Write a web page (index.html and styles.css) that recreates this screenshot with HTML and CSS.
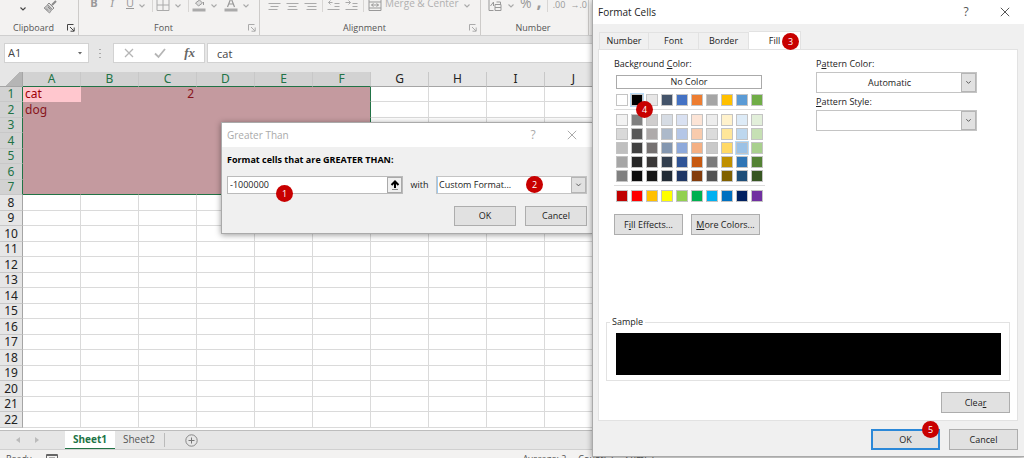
FILE: index.html
```html
<!DOCTYPE html>
<html lang="en">
<head>
<meta charset="utf-8">
<title>Format Cells</title>
<link rel="stylesheet" href="styles.css">
</head>
<body>
<svg class="defs" aria-hidden="true">
  <symbol id="chev" viewBox="0 0 8 6"><path d="M1.5 1.5 4 4 6.5 1.5" fill="none" stroke="currentColor" stroke-width="1.1"/></symbol>
  <symbol id="launch" viewBox="0 0 8 8"><path d="M.5 6.500V.5H6.500M3 3 7 7M7.200 3.500V7.200H3.500" fill="none" stroke="currentColor"/></symbol>
  <symbol id="close" viewBox="0 0 10 10"><path d="M.8.8 9.200 9.200M9.200.8.8 9.200" fill="none" stroke="currentColor" stroke-width="1"/></symbol>
</svg>
<main class="app">
  <header class="ribbon">
    <section class="group clipboard">
      <div class="commands">
        <svg class="chev dark"><use href="#chev"/></svg>
        <svg class="brush" viewBox="0 0 14 14"><path d="M13 1 9 5" stroke="#8a8a8a" stroke-width="2"/><path d="M6 3l5 5-1.500 1.500-5-5z" fill="#ddd" stroke="#8a8a8a"/><path d="M4.500 5 9 9.500 6.500 13 1 8z" fill="#c4c4c4" stroke="#999"/><path d="M3 8.500 5 10.500M5 7 7.500 9.500" stroke="#888"/></svg>
      </div>
      <div class="caption"><span>Clipboard</span><svg class="launch dark"><use href="#launch"/></svg></div>
    </section>
    <section class="group font">
      <div class="commands">
        <b>B</b><i>I</i><u>U</u><svg class="chev"><use href="#chev"/></svg><span class="rule"></span>
        <svg class="ic" viewBox="0 0 13 12"><path d="M.5 0V10.500H12.500V0M.5 5H12.500M6.500 0V10.500" fill="none" stroke="#aaa"/></svg>
        <svg class="chev"><use href="#chev"/></svg><span class="rule"></span>
        <svg class="ic" viewBox="0 0 13 12"><path d="M3 3 7 0 10 3 6 6zM11 2v3" fill="#ddd" stroke="#999"/><path d="M0 8.500H13V11.500H0z" fill="#aaa"/></svg>
        <svg class="chev"><use href="#chev"/></svg>
        <svg class="ic" viewBox="0 0 13 12"><path d="M3 7 6.500-2 10 7M4.500 4H8.500" fill="none" stroke="#999" stroke-width="1.200"/><path d="M0 8.500H13V11.500H0z" fill="#aaa"/></svg>
        <svg class="chev"><use href="#chev"/></svg>
      </div>
      <div class="caption"><span>Font</span><svg class="launch"><use href="#launch"/></svg></div>
    </section>
    <section class="group align">
      <div class="commands">
        <svg class="ic" viewBox="0 0 13 12"><path d="M0 3.500H12M2 6.500H10M0 9.500H9" stroke="#aaa"/></svg>
        <svg class="ic" viewBox="0 0 13 12"><path d="M0 3.500H12M2 6.500H10M1 9.500H11" stroke="#aaa"/></svg>
        <svg class="ic" viewBox="0 0 13 12"><path d="M0 3.500H12M3 6.500H12M2 9.500H12" stroke="#aaa"/></svg>
        <span class="rule"></span>
        <svg class="ic" viewBox="0 0 13 12"><path d="M5 2.500H1M3 .5 1 2.500 3 4.500M7 3.500H12M7 6.500H12M0 9.500H12" fill="none" stroke="#aaa"/></svg>
        <svg class="ic" viewBox="0 0 13 12"><path d="M0 2.500H5M3 .5 5 2.500 3 4.500M7 3.500H12M7 6.500H12M0 9.500H12" fill="none" stroke="#aaa"/></svg>
        <span class="rule"></span>
        <svg class="ic" viewBox="0 0 13 12"><path d="M.5 0V10.500H12.500V0M.5 8H12.500M.5 2H12.500M3 5H10M5 3.500 3 5 5 6.500M8 3.500 10 5 8 6.500" fill="none" stroke="#999"/></svg>
        <span class="merge">Merge &amp; Center</span><svg class="chev"><use href="#chev"/></svg>
      </div>
      <div class="caption"><span>Alignment</span><svg class="launch"><use href="#launch"/></svg></div>
    </section>
    <section class="group number">
      <div class="commands">
        <svg class="ic" viewBox="0 0 13 12"><path d="M.5 0V10.500H5M2 6 5 2V6M6.500 4.500H12.500V10.500H6.500zM6.500 7.500H12.500M8 2H12V4" fill="none" stroke="#999"/></svg>
        <svg class="chev"><use href="#chev"/></svg><span class="pct">%</span><b class="comma">,</b><span class="rule"></span>
        <span class="dec">.00</span><span class="dec">→.0</span>
      </div>
      <div class="caption"><span>Number</span></div>
    </section>
  </header>

  <div class="formula">
    <div class="namebox"><input aria-label="Name box" value="A1"><svg viewBox="0 0 6 4"><path d="M1 1H5L3 3.500z" fill="#666"/></svg></div>
    <span class="dots"></span>
    <div class="fx">
      <svg viewBox="0 0 12 12"><path d="M2 2 10 10M10 2 2 10" stroke="#b5b5b5" stroke-width="1.300"/></svg>
      <svg viewBox="0 0 12 12"><path d="M1 6.500 4.500 10 11 2" fill="none" stroke="#b5b5b5" stroke-width="1.800"/></svg>
      <i>fx</i>
    </div>
    <input class="bar" aria-label="Formula bar" value="cat">
  </div>

  <div class="sheet"><table><thead></thead><tbody></tbody></table></div>

  <nav class="sheets">
    <svg class="nav" viewBox="0 0 4 6"><path d="M4 0V6L0 3z" fill="#bbb"/></svg>
    <svg class="nav" viewBox="0 0 4 6"><path d="M0 0V6L4 3z" fill="#bbb"/></svg>
    <button class="tab on">Sheet1</button><button class="tab">Sheet2</button>
    <span class="end"></span>
    <button class="add" aria-label="New sheet"><svg viewBox="0 0 13 13"><circle cx="6.500" cy="6.500" r="5.700" fill="none" stroke="#888"/><path d="M6.500 3.500V9.500M3.500 6.500H9.500" stroke="#777"/></svg></button>
  </nav>
  <footer class="status">
    <span>Ready</span>
    <svg viewBox="0 0 12 10"><path d="M.5.5H11.500V9.500H.5zM0 1.500H12M3 4H9M3 6H9" fill="none" stroke="#666"/></svg>
    <span class="avg">Average: 2</span><span>Count: 3</span><span>Sum: 2</span>
  </footer>
</main>

<section class="window greater" role="dialog" aria-labelledby="gt">
  <header class="title"><h2 id="gt">Greater Than</h2><button class="tool" aria-label="Help">?</button><button class="tool" aria-label="Close"><svg><use href="#close"/></svg></button></header>
  <div class="body">
    <label class="lead" for="val">Format cells that are GREATER THAN:</label>
    <div class="row">
      <div class="ref"><input id="val" value="-1000000"><button aria-label="Pick range"><svg viewBox="0 0 10 10"><path d="M5 8V3M1.500 5 5 1.500 8.500 5" fill="none" stroke="#000" stroke-width="2"/><path d="M2 9.500H8" stroke="#888"/></svg></button><span class="badge one">1</span></div>
      <label for="with">with</label>
      <div class="select custom"><select id="with"><option>Custom Format...</option></select><svg><use href="#chev"/></svg><span class="badge two">2</span></div>
    </div>
    <div class="actions"><button class="btn">OK</button><button class="btn">Cancel</button></div>
  </div>
</section>

<section class="window format" role="dialog" aria-labelledby="fc">
  <header class="title"><h2 id="fc">Format Cells</h2><button class="tool" aria-label="Help">?</button><button class="tool" aria-label="Close"><svg><use href="#close"/></svg></button></header>
  <div class="tabs" role="tablist">
    <button role="tab">Number</button><button role="tab">Font</button><button role="tab">Border</button><button role="tab" class="on" aria-selected="true">Fill<span class="badge three">3</span></button>
  </div>
  <div class="panel">
    <div class="columns">
      <div class="colors">
        <p>Background <u>C</u>olor:</p>
        <button class="none">No Color</button>
        <div class="palette"></div>
        <div class="more"><button class="btn">F<u>i</u>ll Effects...</button><button class="btn"><u>M</u>ore Colors...</button></div>
      </div>
      <div class="patterns">
        <label for="pc">P<u>a</u>ttern Color:</label>
        <div class="select"><select id="pc" class="center"><option>Automatic</option></select><svg><use href="#chev"/></svg></div>
        <label for="ps"><u>P</u>attern Style:</label>
        <div class="select"><select id="ps"><option></option></select><svg><use href="#chev"/></svg></div>
      </div>
    </div>
    <fieldset><legend>Sample</legend><div class="sample"></div></fieldset>
    <button class="btn clear">Clea<u>r</u></button>
  </div>
  <div class="actions"><button class="btn primary">OK<span class="badge five">5</span></button><button class="btn">Cancel</button></div>
</section>
<script src="app.js"></script>
</body>
</html>
```

FILE: app.js
```js
const letters = "ABCDEFGHIJKLMNOPQR".split("");
const values = { A1: "cat", A2: "dog", C1: "2" };
const selCols = 6, selRows = 7;

document.querySelector(".sheet thead").innerHTML =
  '<tr><th class="corner"></th>' +
  letters.map((l, i) => `<th class="${i < selCols ? "hot" : ""}">${l}</th>`).join("") + "</tr>";

let rows = "";
for (let r = 1; r <= 22; r++) {
  rows += `<tr><th class="${r <= selRows ? "hot" : ""}">${r}</th>`;
  letters.forEach((l, i) => {
    const cls = [];
    if (r <= selRows && i < selCols) {
      cls.push("sel");
      if (i === selCols - 1) cls.push("right");
      if (r === selRows) cls.push("bottom");
    }
    if (l === "A" && r === 1) cls.push("active");
    if (l === "C") cls.push("num");
    rows += `<td class="${cls.join(" ")}">${values[l + r] || ""}</td>`;
  });
  rows += "</tr>";
}
document.querySelector(".sheet tbody").innerHTML = rows;

const theme = [["#ffffff","#000000","#e7e6e6","#44546a","#4472c4","#ed7d31","#a5a5a5","#ffc000","#5b9bd5","#70ad47"]];
const tints = [
  ["#f2f2f2","#808080","#d0cece","#d6dce4","#d9e1f2","#fce4d6","#ededed","#fff2cc","#ddebf7","#e2efda"],
  ["#d9d9d9","#595959","#aeaaaa","#acb9ca","#b4c6e7","#f8cbad","#dbdbdb","#ffe699","#bdd7ee","#c6e0b4"],
  ["#bfbfbf","#404040","#757171","#8497b0","#8ea9db","#f4b084","#c9c9c9","#ffd966","#9bc2e6","#a9d08e"],
  ["#a6a6a6","#262626","#3a3838","#333f4f","#305496","#c65911","#7b7b7b","#bf8f00","#2f75b5","#548235"],
  ["#808080","#0d0d0d","#161616","#222b35","#203764","#833c0c","#525252","#806000","#1f4e78","#375623"]
];
const standard = [["#c00000","#ff0000","#ffc000","#ffff00","#92d050","#00b050","#00b0f0","#0070c0","#002060","#7030a0"]];

const palette = document.querySelector(".palette");
[theme, tints, standard].forEach(block => {
  const grid = document.createElement("div");
  grid.className = "swatches";
  block.flat().forEach(color => {
    const b = document.createElement("button");
    b.setAttribute("aria-label", color);
    b.style.background = color;
    if (color === "#000000") {
      b.className = "picked";
      b.innerHTML = '<span class="badge four">4</span>';
    }
    if (color === "#9bc2e6") b.className = "hover";
    grid.append(b);
  });
  palette.append(grid);
});
```

FILE: styles.css
```css
* { box-sizing: border-box; }
body { margin: 0; height: 100vh; overflow: hidden; position: relative; font: 9px/12px "Open Sans", "Noto Sans", sans-serif; color: #222; background: #fff; }
button, input, select { font: inherit; color: inherit; margin: 0; padding: 0; border: 0; border-radius: 0; background: none; appearance: none; outline: 0; min-width: 0; }
h2, p { margin: 0; font: inherit; }
.defs { display: none; }
u { text-underline-offset: 1px; }

.app { height: 100%; display: flex; flex-direction: column; background: #e6e6e6; }

.ribbon { display: flex; height: 36px; flex: none; background: #f3f2f1; border-bottom: 1px solid #cfcfcf; color: #555; }
.group { display: flex; flex-direction: column; justify-content: space-between; border-right: 1px solid #cdcbc9; }
.clipboard { width: 79px; }
.font { width: 181px; }
.align { width: 221px; }
.number { width: 108px; }
.commands { display: flex; align-items: flex-end; height: 12px; overflow: hidden; color: #999; font-size: 10px; }
.commands > * { flex: none; }
.ribbon .chev { width: 8px; height: 6px; margin-bottom: 3px; color: #aaa; }
.ribbon .chev.dark { color: #444; margin: 0 16px 2px 19px; }
.brush { width: 14px; height: 14px; }
.clipboard .commands { height: 14px; }
.ic { width: 14px; height: 12px; }
.commands > .ic { margin-top: -4px; }
.rule { width: 1px; height: 12px; background: #d8d6d4; }
.font .commands { padding-left: 11px; gap: 7px; font-size: 11px; line-height: 18px; }
.font .commands > .chev { margin-left: -3px; }
.font .commands b, .font .commands u { width: 8px; text-align: center; }
.font .commands i { width: 8px; text-align: center; font-family: "Liberation Serif", serif; }
.font .commands > :nth-child(-n+2) { margin-right: 3px; }
.font .rule { margin: 0 -4px 0 -1px; }
.font .commands > .ic { margin-left: -1px; }
.font .commands > .rule + .ic { margin-left: 0; }
.align .commands { padding-left: 8px; gap: 4px; }
.align .merge { line-height: 18px; margin-left: -1px; color: #b0b0b0; }
.number .commands { padding-left: 7px; gap: 5px; }
.pct { font-size: 14px; line-height: 18px; }
.comma { font-size: 18px; line-height: 21px; }
.dec { font-size: 9px; line-height: 15px; }
.caption { display: grid; grid-template-columns: 1fr auto; align-items: center; text-align: center; height: 15px; padding-right: 3px; }
.caption span { line-height: 14px; }
.launch { width: 8px; height: 8px; color: #aaa; }
.launch.dark { color: #444; }

.formula { display: flex; align-items: center; height: 36px; padding: 0 0 2px 4px; flex: none; font-size: 11px; line-height: 16px; color: #444; }
.namebox, .fx, .bar { height: 20px; background: #fff; border: 1px solid #d2d2d2; }
.namebox { width: 85px; display: flex; align-items: center; padding: 0 5px 0 3px; }
.namebox input { flex: 1; }
.namebox svg { width: 6px; height: 4px; }
.dots { width: 2px; height: 9px; margin: 0 12px 0 10px; background: repeating-linear-gradient(#aaa 0 1px, transparent 1px 4px); }
.fx { width: 92px; display: flex; align-items: center; justify-content: space-between; padding: 0 9px; }
.fx svg { width: 12px; height: 12px; }
.fx i { font: italic bold 13px/16px "Liberation Serif", serif; color: #666; }
.bar { flex: 1; margin-left: 2px; padding-left: 9px; }

.sheet { flex: 1; min-height: 0; overflow: hidden; border-bottom: 1px solid #bdbdbd; background: #fff; }
table { table-layout: fixed; width: 1067px; border-collapse: separate; border-spacing: 0; font: 12px/14px "Noto Sans", sans-serif; color: #222; }
th, td { padding: 0; height: 15px; overflow: hidden; white-space: nowrap; }
tbody tr:nth-child(even) > * { height: 16px; }
th { background: #e6e6e6; font-weight: 400; border-right: 1px solid #c8c8c8; border-bottom: 1px solid #c8c8c8; }
thead th { width: 58px; border-bottom-color: #a5a5a5; }
th:first-child { width: 23px; border-right-color: #a5a5a5; }
th.hot { background: #d2d2d2; color: #217346; }
thead .hot { border-bottom-color: #217346; }
.hot:first-child { border-right-color: #217346; }
.corner { background: linear-gradient(135deg, #e6e6e6 55%, #b5b5b5 55%); }
td { border-right: 1px solid #dadada; border-bottom: 1px solid #dadada; padding-left: 2px; }
td.num { text-align: right; padding-right: 2px; }
td.sel { background: #c49a9f; border-color: #c49a9f; color: #87151c; }
td.active { background: #ffc7ce; border-color: #ffc7ce; color: #9c0006; }
td.right { border-right-color: #217346; }
td.bottom { border-bottom-color: #217346; }

.sheets { height: 18px; flex: none; display: flex; align-items: stretch; padding-left: 16px; font-size: 10px; line-height: 14px; color: #555; }
.nav { width: 4px; height: 6px; margin: 6px 15px 0 0; }
.tab { width: 48px; padding-bottom: 2px; }
.sheets .on { width: 50px; margin-left: 11px; background: #fff; color: #217346; font-weight: 700; border-bottom: 1px solid #217346; padding-bottom: 1px; }
.end { width: 1px; margin: 2px 20px 2px 1px; background: #bbb; }
.add { display: flex; align-items: center; }
.add svg { width: 13px; height: 13px; }
.status { flex: none; height: 9px; overflow: hidden; border-top: 1px solid #d0d0d0; background: #f3f2f1; display: flex; padding: 3px 0 0 6px; color: #555; }
.status svg { width: 12px; height: 10px; margin: 1px 0 0 14px; }
.avg { margin-left: 465px; }
.status span + span { margin-left: 12px; }

.window { position: absolute; display: flex; flex-direction: column; background: #f0f0f0; border: 1px solid #aaa; box-shadow: 0 1px 6px #0006; }
.greater { left: 221px; top: 122px; width: 372px; }
.format { top: 0; right: 0; bottom: 1px; width: 432px; border-width: 0 0 1px 1px; }
.title { display: flex; align-items: center; height: 24px; flex: none; background: #fff; padding: 0 14px 0 5px; }
.format .title { padding-right: 13px; }
.title h2 { flex: 1; font-size: 10px; }
.tool { width: 12px; height: 16px; margin-left: 27px; font-size: 12px; line-height: 16px; color: #555; display: flex; align-items: center; justify-content: center; }
.tool svg { width: 10px; height: 10px; }
.greater .title, .greater .tool { color: #aaa; }
.btn { position: relative; background: #e1e1e1; border: 1px solid #adadad; width: 69px; height: 21px; text-align: center; }
.btn.primary { border: 2px solid #2b88d8; }
.actions { display: flex; justify-content: flex-end; gap: 9px; }
.greater .body { padding: 7px 5px; }
.greater .btn { width: 62px; height: 20px; }
.lead { display: block; font-weight: 700; color: #000; }
.row { display: flex; align-items: center; margin: 10px 0 12px; justify-content: space-between; }
.ref { position: relative; display: flex; width: 176px; height: 18px; border: 1px solid #bbb; background: #fff; }
.ref input { flex: 1; padding-left: 2px; }
.ref button { width: 15px; border: 1px solid #aaa; background: #f0f0f0; display: flex; align-items: center; justify-content: center; }
.ref button svg { width: 10px; height: 10px; }
.select { position: relative; display: grid; grid-template-columns: 1fr 15px; height: 21px; border: 1px solid #c4c4c4; background: #fff; }
.select select { grid-area: 1 / 1 / 2 / 3; width: 100%; height: 100%; padding: 0 16px 0 2px; }
.select .center { text-align: center; text-align-last: center; }
.select svg { grid-area: 1 / 2; width: 15px; height: 100%; padding: 3px; background: #e1e1e1; border: 1px solid #b5b5b5; color: #555; pointer-events: none; }
.custom { width: 151px; height: 18px; }
.custom select { border-left: 1px solid #9ccbf2; padding-left: 1px; }

.badge { position: absolute; z-index: 2; width: 17px; height: 17px; border-radius: 50%; background: #c80000; color: #fff; text-align: center; font: 9px/17px "Open Sans", sans-serif; }
.one { left: 48px; top: 8px; }
.two { left: 89px; top: -1px; }
.three { left: 33px; top: 1px; }
.four { left: 4px; top: 6px; }
.five { right: -1px; top: -10px; }

.tabs { display: flex; padding: 7px 0 0 6px; flex: none; }
.tabs button { position: relative; width: 50px; height: 17px; border: 1px solid #e2e2e2; border-width: 1px 1px 0 0; margin-top: 1px; }
.tabs button:first-child { border-left-width: 1px; }
.tabs .on { width: 52px; height: 18px; margin-top: 0; background: #fff; }
.panel { flex: 1; display: flex; flex-direction: column; margin: 0 6px 0 5px; padding: 8px 7px 7px; border: 1px solid #e2e2e2; background: #fff; }
.columns { display: flex; padding-left: 8px; }
.colors { width: 202px; }
.none { display: block; width: 146px; height: 14px; line-height: 12px; margin: 5px 0 1px 2px; border: 1px solid #aaa; }
.palette { width: 151px; margin-bottom: 9px; }
.swatches { display: grid; grid-template-columns: repeat(10, 12px); gap: 2px 3px; padding: 4px 2px 3px; }
.swatches + .swatches { border-top: 1px solid #dcdcdc; }
.swatches button { position: relative; height: 12px; border: 1px solid #c4c4c4; }
.swatches .picked, .swatches .hover { box-shadow: 0 0 0 1px #b8dcf8; }
.more { display: flex; gap: 8px; }
.patterns { width: 161px; }
.patterns label { display: block; }
.patterns .select { margin: 2px 0 3px; }
fieldset { margin: auto 0 11px; padding: 5px 8px 5px 9px; border: 1px solid #e2e2e2; }
legend { padding: 0 2px; margin-left: -6px; }
.sample { height: 42px; background: #000; }
.clear { align-self: flex-end; }
.format > .actions { padding: 8px 6px 6px; }
```
